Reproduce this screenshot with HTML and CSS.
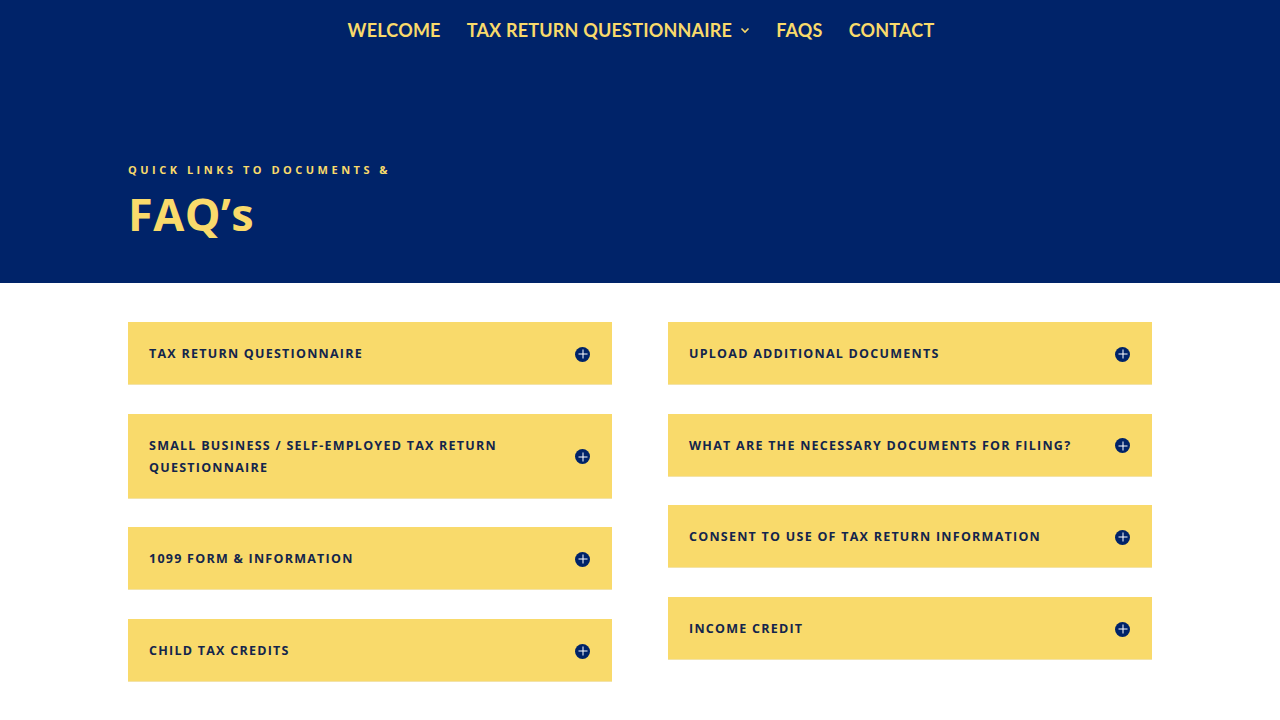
FILE: index.html
```html
<!DOCTYPE html>
<html lang="en">
<head>
<meta charset="utf-8">
<title>FAQ's</title>
<link rel="stylesheet" href="styles.css">
</head>
<body>
<header class="hero">
  <nav class="nav">
    <a class="nav-link" href="#">WELCOME</a>
    <a class="nav-link has-sub" href="#">TAX RETURN QUESTIONNAIRE
      <svg class="chev" width="10" height="7" viewBox="0 0 10 7"><path d="M1.5 1.5 L5 5 L8.5 1.5" fill="none" stroke="currentColor" stroke-width="1.6"/></svg>
    </a>
    <a class="nav-link" href="#">FAQS</a>
    <a class="nav-link" href="#">CONTACT</a>
  </nav>
  <div class="hero-text">
    <div class="kicker">QUICK LINKS TO DOCUMENTS &amp;</div>
    <h1 class="title">FAQ’s</h1>
  </div>
</header>
<main class="faq">
  <div class="col">
    <div class="toggle"><span class="t-label">TAX RETURN QUESTIONNAIRE</span><span class="plus"></span></div>
    <div class="toggle"><span class="t-label">SMALL BUSINESS / SELF-EMPLOYED TAX RETURN QUESTIONNAIRE</span><span class="plus"></span></div>
    <div class="toggle"><span class="t-label">1099 FORM &amp; INFORMATION</span><span class="plus"></span></div>
    <div class="toggle"><span class="t-label">CHILD TAX CREDITS</span><span class="plus"></span></div>
  </div>
  <div class="col">
    <div class="toggle"><span class="t-label">UPLOAD ADDITIONAL DOCUMENTS</span><span class="plus"></span></div>
    <div class="toggle"><span class="t-label">WHAT ARE THE NECESSARY DOCUMENTS FOR FILING?</span><span class="plus"></span></div>
    <div class="toggle"><span class="t-label">CONSENT TO USE OF TAX RETURN INFORMATION</span><span class="plus"></span></div>
    <div class="toggle"><span class="t-label">INCOME CREDIT</span><span class="plus"></span></div>
  </div>
</main>
</body>
</html>
```
FILE: styles.css
```css
* { box-sizing: border-box; }
html, body { margin: 0; padding: 0; background: #ffffff; }
body { font-family: "Open Sans", "Noto Sans", sans-serif; }

.hero {
  background: #002369;
  height: 283px;
  display: flex;
  flex-direction: column;
}
.nav {
  display: flex;
  justify-content: center;
  gap: 26px;
  padding-top: 19px;
  padding-left: 2px;
}
.nav-link {
  color: #f9da6b;
  text-decoration: none;
  font-family: "Lato", sans-serif;
  font-weight: 700;
  font-size: 18px;
  letter-spacing: 0.2px;
  line-height: 22px;
  display: flex;
  align-items: center;
}
.has-sub .chev { margin-left: 8px; color: #f9da6b; }

.hero-text { padding: 0 128px; margin-top: 122px; }
.kicker {
  color: #f9da6b;
  font-weight: 700;
  font-size: 11px;
  letter-spacing: 3.5px;
  line-height: 14px;
}
.title {
  margin: 10px 0 0;
  color: #f9da6b;
  font-weight: 700;
  font-size: 45px;
  line-height: 54px;
  letter-spacing: 0.5px;
}

.faq {
  display: flex;
  gap: 56px;
  padding: 39px 128px 0;
}
.col {
  width: 484px;
  display: flex;
  flex-direction: column;
  gap: 28.7px;
}
.toggle {
  background: #f9da6b;
  border-bottom: 1px solid #f3e3a8;
  padding: 21px 22px 19px 21px;
  display: flex;
  align-items: center;
  justify-content: space-between;
  gap: 20px;
}
.t-label {
  flex: 1;
  color: #13254c;
  font-weight: 700;
  font-size: 12.5px;
  letter-spacing: 1.25px;
  line-height: 22px;
}
.plus {
  flex: none;
  width: 15px;
  height: 15px;
  border-radius: 50%;
  background: #002369;
  position: relative;
}
.plus::before, .plus::after {
  content: "";
  position: absolute;
  background: #ffffff;
  left: 50%;
  top: 50%;
  transform: translate(-50%, -50%);
}
.plus::before { width: 9px; height: 1px; }
.plus::after { width: 1px; height: 9px; }
```
